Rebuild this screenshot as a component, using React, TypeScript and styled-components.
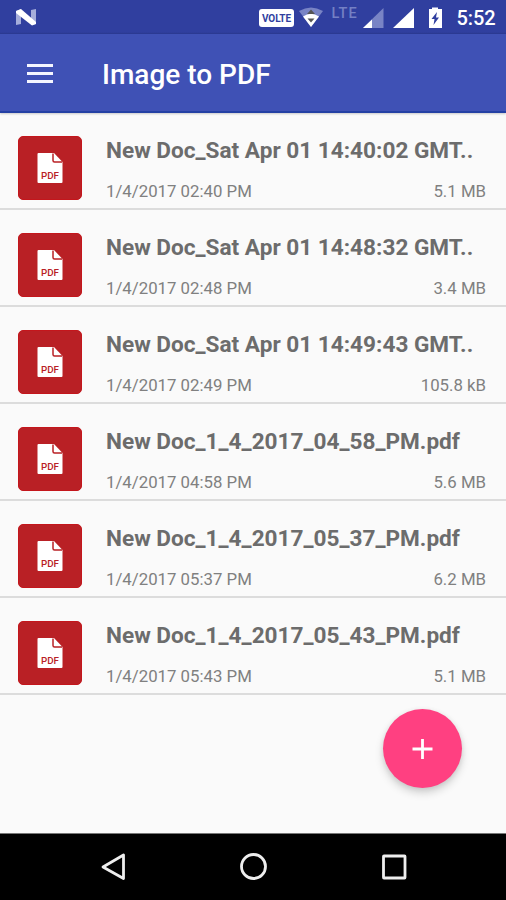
import React from 'react';
import styled, { createGlobalStyle } from 'styled-components';

const GlobalStyle = createGlobalStyle`
  * { box-sizing: border-box; }
  body { margin: 0; background: #fafafa; font-family: Roboto, 'Liberation Sans', sans-serif; }
`;

const Screen = styled.div`
  position: relative;
  width: 506px;
  height: 900px;
  display: flex;
  flex-direction: column;
  background: #fafafa;
  overflow: hidden;
`;

const StatusBar = styled.header`
  flex: 0 0 34px;
  display: flex;
  background: linear-gradient(#303f9f 32px, #2b3990 34px);
`;

const StatusIcons = styled.svg`
  display: block;
  width: 506px;
  height: 34px;
`;

const Clock = styled.text`
  font: 500 20px Roboto, sans-serif;
  fill: #fff;
`;

const SignalLabel = styled.text`
  font: 500 14.5px Roboto, sans-serif;
  letter-spacing: 0.3px;
  fill: #7480c4;
`;

const BadgeLabel = styled.text`
  font: 700 10px Roboto, sans-serif;
  fill: #303f9f;
`;

const AppBar = styled.nav`
  flex: 0 0 79px;
  display: flex;
  align-items: center;
  padding: 2px 0 0 27px;
  background: #3f51b5;
  border-bottom: 2px solid #2440a4;
  box-shadow: 0 1px 2px rgba(0, 0, 0, 0.2);
  z-index: 1;
`;

const MenuButton = styled.button`
  display: flex;
  width: 26px;
  height: 26px;
  padding: 0;
  border: 0;
  background: none;
`;

const Heading = styled.h1`
  margin: 3px 0 0 49px;
  font-size: 28px;
  font-weight: 500;
  line-height: 32px;
  color: #fff;
`;

const List = styled.ul`
  flex: 1;
  margin: 0;
  padding: 0;
  list-style: none;
`;

const Row = styled.li`
  display: flex;
  height: 97px;
  padding: 23px 20px 0 18px;
  border-bottom: 2px solid #dcdcdc;
`;

const Tile = styled.div`
  display: flex;
  align-items: center;
  justify-content: center;
  width: 64px;
  height: 64px;
  border: 1px solid #c4161c;
  border-radius: 5px;
  background: #b92025;
`;

const TileLabel = styled.text`
  font: 500 9px Roboto, sans-serif;
  fill: #b92025;
`;

const Details = styled.div`
  flex: 1;
  margin-left: 24px;
  white-space: nowrap;
`;

const FileName = styled.div`
  height: 30px;
  line-height: 30px;
  font-size: 22.6px;
  font-weight: 700;
  color: #6c6c6c;
`;

const Meta = styled.div`
  display: flex;
  justify-content: space-between;
  margin-top: 15px;
  line-height: 20px;
  font-size: 16.8px;
  color: #808080;
`;

const Fab = styled.button`
  position: absolute;
  left: 383px;
  top: 709px;
  display: flex;
  align-items: center;
  justify-content: center;
  width: 79px;
  height: 79px;
  padding: 0;
  border: 0;
  border-radius: 50%;
  background: #ff4081;
  box-shadow: 0 5px 8px rgba(0, 0, 0, 0.17), 0 1px 5px rgba(0, 0, 0, 0.08);
`;

const NavBar = styled.footer`
  flex: 0 0 67px;
  display: flex;
  background: #000;
  border-top: 1px solid #777;
`;

const files = [
  { name: 'New Doc_Sat Apr 01 14:40:02 GMT..', date: '1/4/2017 02:40 PM', size: '5.1 MB' },
  { name: 'New Doc_Sat Apr 01 14:48:32 GMT..', date: '1/4/2017 02:48 PM', size: '3.4 MB' },
  { name: 'New Doc_Sat Apr 01 14:49:43 GMT..', date: '1/4/2017 02:49 PM', size: '105.8 kB' },
  { name: 'New Doc_1_4_2017_04_58_PM.pdf', date: '1/4/2017 04:58 PM', size: '5.6 MB' },
  { name: 'New Doc_1_4_2017_05_37_PM.pdf', date: '1/4/2017 05:37 PM', size: '6.2 MB' },
  { name: 'New Doc_1_4_2017_05_43_PM.pdf', date: '1/4/2017 05:43 PM', size: '5.1 MB' },
];

const PdfIcon = () => (
  <svg width="26" height="32" viewBox="0 0 26 32">
    <path d="M1.500 1H17L25.500 10V30Q25.500 31 24.500 31H1.500Q0.500 31 0.500 30V2Q0.500 1 1.500 1Z" fill="#fff" />
    <path d="M16 1.500V8.500Q16 10 17.500 10H25" fill="none" stroke="#b92025" strokeWidth="1.500" />
    <TileLabel x="4" y="27.300" textLength="18" lengthAdjust="spacingAndGlyphs">PDF</TileLabel>
  </svg>
);

const StatusGlyphs = () => (
  <StatusIcons viewBox="0 0 506 34">
    <path d="M16 11L21 9V24L16 25ZM31 10L36 9V24L31 25Z" fill="#a5addb" />
    <path d="M16 11L21 9L36 22V24L32 25.500L16 13Z" fill="#fff" />
    <rect x="259" y="9" width="35" height="18" rx="3" fill="#fff" />
    <BadgeLabel x="262" y="21.500" textLength="29">VOLTE</BadgeLabel>
    <path d="M299 11Q311 4 323 11L311 27Z" fill="#7984c5" />
    <path d="M303 16.500Q311 11 319 16.500L311 27Z" fill="#fff" />
    <path d="M307 14L311 9.500L315 14ZM307.500 18.500H314.500L311 22.500Z" fill="#555" />
    <SignalLabel x="331.500" y="18" textLength="25.500">LTE</SignalLabel>
    <path d="M383.500 8V28H363Z" fill="#7984c5" />
    <path d="M372 19.500V28H363Z" fill="#fff" />
    <path d="M414 8V28H393Z" fill="#fff" />
    <path d="M432 7.500H438V9H442V28H429V9H432Z" fill="#fff" />
    <path d="M437 12L431.500 19H434.500L433.500 25L439 17.500H436Z" fill="#303f9f" />
    <Clock x="456.500" y="25" textLength="39">5:52</Clock>
  </StatusIcons>
);

export default function App() {
  return (
    <Screen>
      <GlobalStyle />
      <StatusBar>
        <StatusGlyphs />
      </StatusBar>
      <AppBar>
        <MenuButton aria-label="Menu">
          <svg width="26" height="26" viewBox="0 0 26 26">
            <path d="M0 4.500H26M0 12.500H26M0 20.500H26" stroke="#f4f6ff" strokeWidth="3" />
          </svg>
        </MenuButton>
        <Heading>Image to PDF</Heading>
      </AppBar>
      <List>
        {files.map((f) => (
          <Row key={f.name}>
            <Tile>
              <PdfIcon />
            </Tile>
            <Details>
              <FileName>{f.name}</FileName>
              <Meta>
                <span>{f.date}</span>
                <span>{f.size}</span>
              </Meta>
            </Details>
          </Row>
        ))}
      </List>
      <Fab aria-label="Add document">
        <svg width="22" height="22" viewBox="0 0 22 22">
          <path d="M10.500 1V21M0.500 11H20.500" stroke="#fff" strokeWidth="2.800" />
        </svg>
      </Fab>
      <NavBar>
        <svg width="506" height="66" viewBox="0 834 506 66" fill="none" stroke="#eee" strokeWidth="2.800">
          <path d="M123.500 855V878.500L103 867Z" strokeLinejoin="round" />
          <circle cx="253.500" cy="866.500" r="12" />
          <rect x="383.500" y="856" width="21.500" height="22" rx="0.500" />
        </svg>
      </NavBar>
    </Screen>
  );
}
